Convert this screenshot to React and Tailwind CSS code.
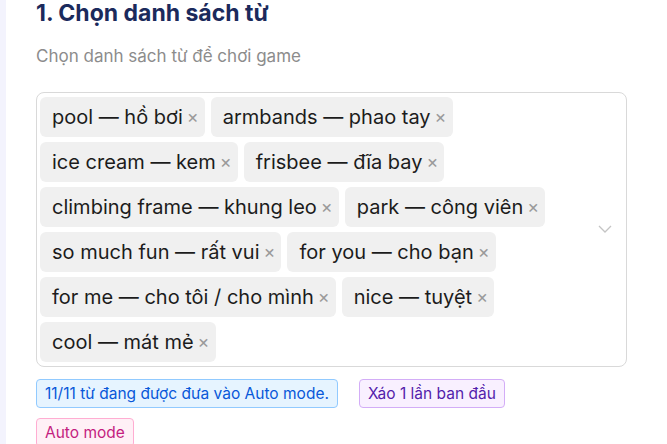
import React from "react";

const words = [
  "pool — hồ bơi",
  "armbands — phao tay",
  "ice cream — kem",
  "frisbee — đĩa bay",
  "climbing frame — khung leo",
  "park — công viên",
  "so much fun — rất vui",
  "for you — cho bạn",
  "for me — cho tôi / cho mình",
  "nice — tuyệt",
  "cool — mát mẻ",
];

function Tag({ label }) {
  return (
    <span className="flex items-center h-[40px] rounded-md bg-[#f0f0f0] pl-[12px] pr-[6px] text-[20px] text-[#1c1c1c]">
      {label}
      <span className="ml-[4px] text-[18px] text-[#9a9a9a] leading-none">×</span>
    </span>
  );
}

export default function App() {
  return (
    <div className="flex min-h-[444px] bg-white" style={{ fontFamily: "Inter, 'Noto Sans', sans-serif" }}>
      <div className="w-[6px] bg-[#f3f3fd]" />
      <div className="flex-1 pl-[30px] pr-[40px]">
        <h2 className="text-[23px] font-bold text-[#1b2a5c] leading-none pt-[2px]">1. Chọn danh sách từ</h2>
        <p className="mt-[19px] text-[17px] text-[#8c8c8c]">Chọn danh sách từ để chơi game</p>

        <div className="mt-[22px] relative rounded-lg border border-[#d9d9d9] pl-[3px] pr-[60px] pt-[4px] pb-[4px]">
          <div className="flex flex-wrap gap-x-[6px] gap-y-[5px]">
            {words.map((w) => (
              <Tag key={w} label={w} />
            ))}
          </div>
          <svg className="absolute right-[14px] top-1/2 -translate-y-1/2" width="14" height="10" viewBox="0 0 14 10">
            <path d="M1 2 L7 8 L13 2" fill="none" stroke="#c4c4c4" strokeWidth="1.3" />
          </svg>
        </div>

        <div className="mt-[12px] flex gap-x-[21px]">
          <span className="rounded-[4px] border border-[#91caff] bg-[#e6f4ff] px-[8px] py-[2px] text-[15.5px] text-[#0958d9]">
            11/11 từ đang được đưa vào Auto mode.
          </span>
          <span className="rounded-[4px] border border-[#d3adf7] bg-[#f9f0ff] px-[8px] py-[2px] text-[15.5px] text-[#531dab]">
            Xáo 1 lần ban đầu
          </span>
        </div>
        <div className="mt-[10px] flex">
          <span className="rounded-[4px] border border-[#ffadd2] bg-[#fff0f6] px-[8px] py-[2px] text-[15.5px] text-[#c41d7f]">
            Auto mode
          </span>
        </div>
      </div>
    </div>
  );
}
